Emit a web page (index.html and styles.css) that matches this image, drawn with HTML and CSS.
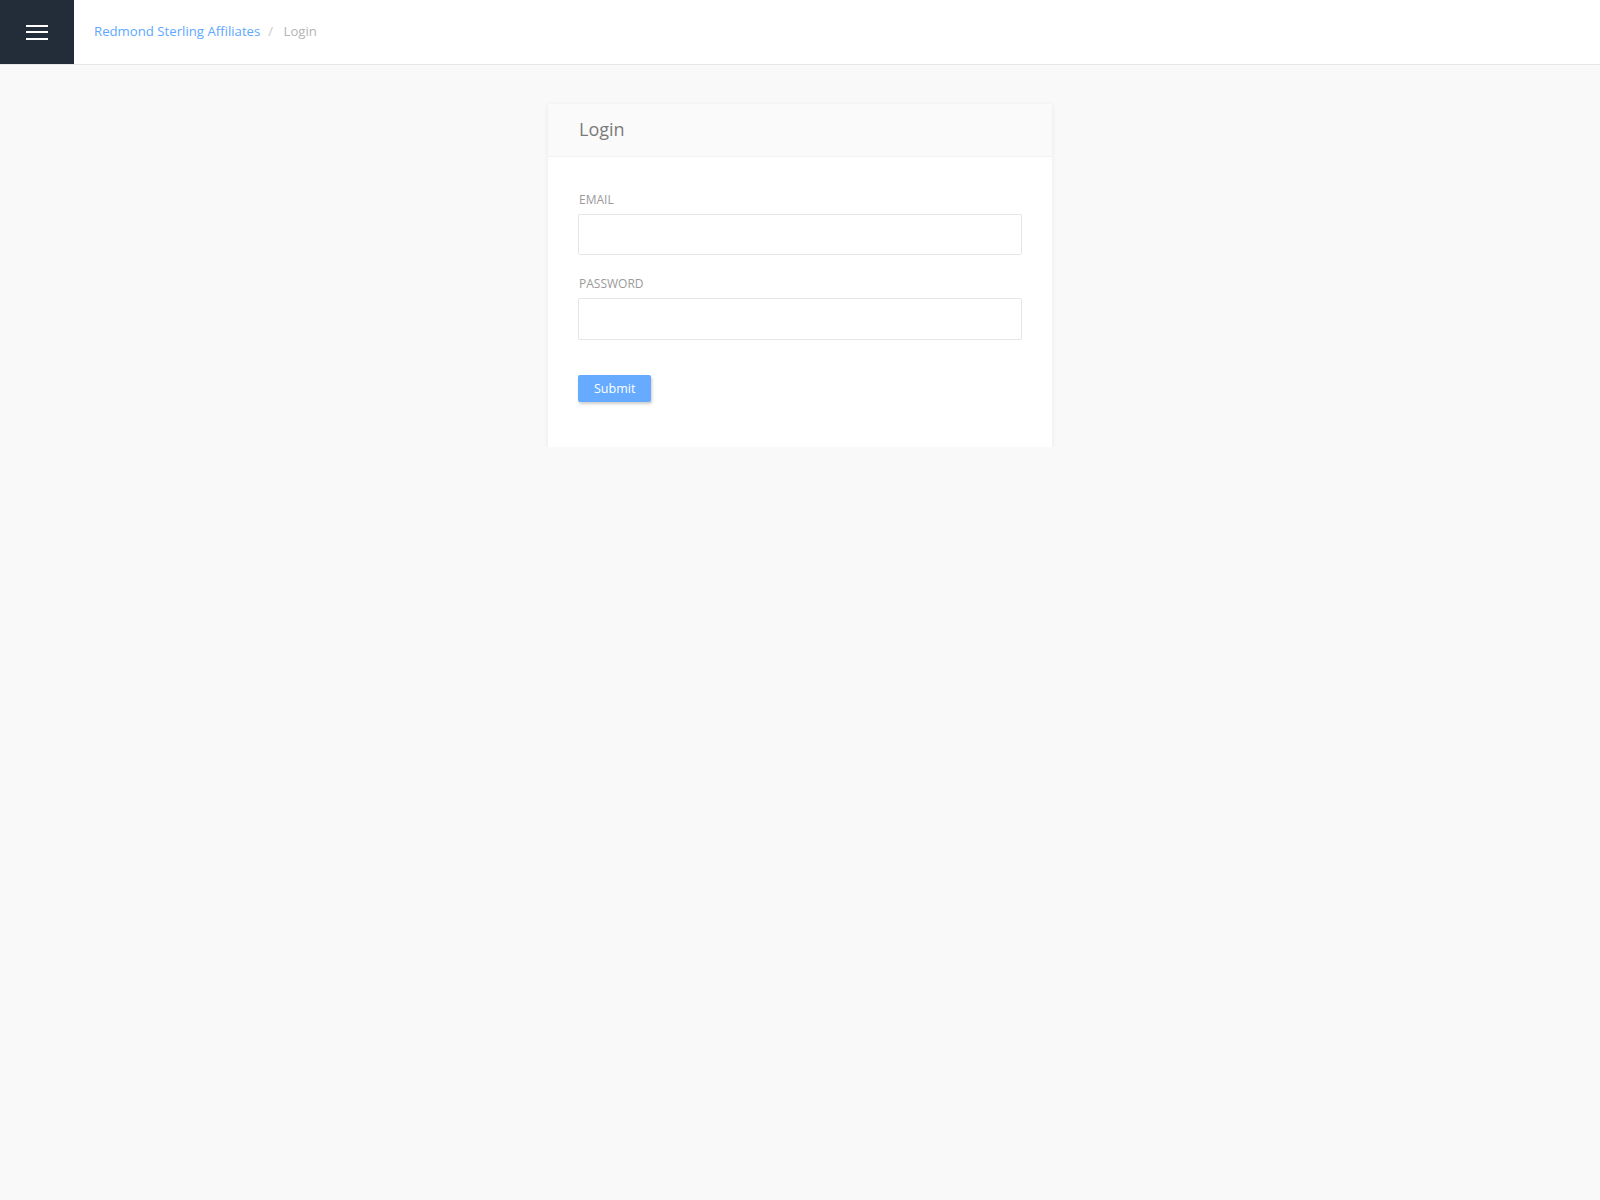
FILE: index.html
```html
<!DOCTYPE html>
<html>

<head>
    <meta charset="utf-8">
    <title>Login</title>
    <link rel="stylesheet" href="styles.css">
</head>

<body>
    <div class="topbar">
        <a class="menu_btn" href="#">
            <span></span>
            <span></span>
            <span></span>
        </a>
        <div class="crumbs">
            <a href="#">Redmond Sterling Affiliates</a>
            <span class="sep">/</span>
            <span class="current">Login</span>
        </div>
    </div>

    <div class="page">
        <div class="card">
            <div class="card_head">
                <h2>Login</h2>
            </div>
            <form class="card_body" onsubmit="return false">
                <label for="email">Email</label>
                <input type="text" id="email">
                <label for="password">Password</label>
                <input type="password" id="password">
                <button type="submit">Submit</button>
            </form>
        </div>
    </div>
</body>

</html>
```

FILE: styles.css
```css
html,
body {
    margin: 0;
    padding: 0;
    background: #f9f9f9;
    font-family: "Open Sans", "Liberation Sans", sans-serif;
}

.topbar {
    display: flex;
    align-items: center;
    height: 64px;
    background: #fff;
    border-bottom: 1px solid #e6e6e6;
}

.menu_btn {
    display: flex;
    flex-direction: column;
    justify-content: center;
    gap: 4.5px;
    width: 74px;
    height: 64px;
    padding-left: 26px;
    box-sizing: border-box;
    background: #232d3a;
}

.menu_btn span {
    display: block;
    width: 22px;
    height: 2px;
    background: #fff;
}

.crumbs {
    margin: 0 0 2px 20px;
    font-size: 13.2px;
}

.crumbs a {
    color: #5ea8ff;
    text-decoration: none;
}

.crumbs .sep {
    color: #c8c8c8;
    margin: 0 7px 0 4.5px;
}

.crumbs .current {
    color: #b4b4b4;
}

.page {
    padding-top: 39px;
}

.card {
    width: 504px;
    margin: 0 auto;
    background: #fff;
    box-shadow: 0 1px 5px rgba(0, 0, 0, 0.07);
}

.card_head {
    display: flex;
    align-items: center;
    height: 53px;
    padding: 0 31px 3px 31px;
    box-sizing: border-box;
    background: #fafafa;
    border-bottom: 1px solid #f2f2f2;
}

.card_head h2 {
    margin: 0;
    font-size: 18px;
    font-weight: normal;
    color: #7a7a7a;
}

.card_body {
    display: flex;
    flex-direction: column;
    padding: 34px 30px 45px 30px;
}

.card_body label {
    display: block;
    font-size: 12px;
    line-height: 17px;
    text-transform: uppercase;
    color: #9a9a9a;
    padding-left: 1px;
    margin-bottom: 6px;
}

.card_body input {
    height: 41px;
    margin: 0 0 20px 0;
    padding: 0 10px;
    box-sizing: border-box;
    border: 1px solid #e6e6e6;
    border-radius: 2px;
    outline: none;
    font-family: inherit;
    font-size: 13px;
}

.card_body input#password {
    height: 42px;
}

.card_body button {
    align-self: flex-start;
    height: 27px;
    margin-top: 15px;
    padding: 0 16px;
    background: #66abff;
    color: #fff;
    border: none;
    border-radius: 2px;
    box-shadow: 1px 2px 3px rgba(0, 0, 0, 0.2);
    font-family: inherit;
    font-size: 12.5px;
    cursor: pointer;
}
```
